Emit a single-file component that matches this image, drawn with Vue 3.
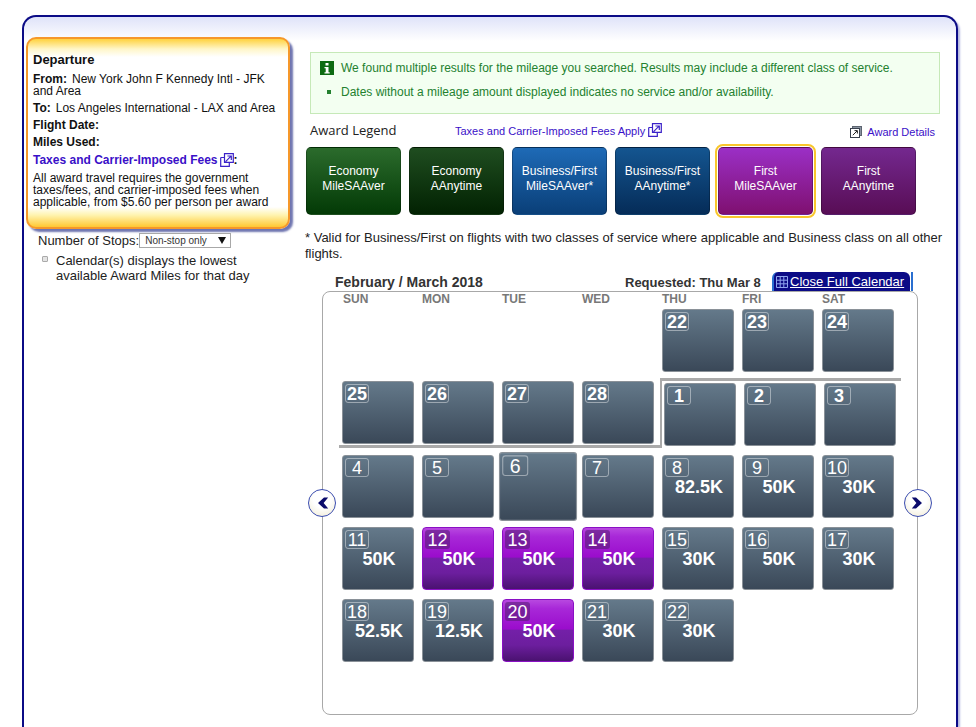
<script setup>
const legend = [
  { a: 'Economy', b: 'MileSAAver', c: 'g1' },
  { a: 'Economy', b: 'AAnytime', c: 'g2' },
  { a: 'Business/First', b: 'MileSAAver*', c: 'b1' },
  { a: 'Business/First', b: 'AAnytime*', c: 'b2' },
  { a: 'First', b: 'MileSAAver', c: 'p1', on: true },
  { a: 'First', b: 'AAnytime', c: 'p2' },
]
const days = ['SUN', 'MON', 'TUE', 'WED', 'THU', 'FRI', 'SAT']
const c = (d, m = '', o = {}) => ({ d, m, ...o })
const weeks = [
  [null, null, null, null, c(22, '', { b: 1 }), c(23, '', { b: 1 }), c(24, '', { b: 1 })],
  [c(25, '', { b: 1 }), c(26, '', { b: 1 }), c(27, '', { b: 1 }), c(28, '', { b: 1 }), c(1, '', { b: 1, s: 1 }), c(2, '', { b: 1, s: 1 }), c(3, '', { b: 1, s: 1 })],
  [c(4), c(5), c(6, '', { big: 1 }), c(7), c(8, '82.5K'), c(9, '50K'), c(10, '30K')],
  [c(11, '50K'), c(12, '50K', { p: 1 }), c(13, '50K', { p: 1 }), c(14, '50K', { p: 1 }), c(15, '30K'), c(16, '50K'), c(17, '30K')],
  [c(18, '52.5K'), c(19, '12.5K'), c(20, '50K', { p: 1 }), c(21, '30K'), c(22, '30K'), null, null],
]
</script>

<template>
  <div class="panel">
    <aside class="side">
      <div class="box">
        <h3>Departure</h3>
        <p class="wrap"><b class="lab">From:</b>New York John F Kennedy Intl - JFK and Area</p>
        <p class="wrap"><b class="lab">To:</b>Los Angeles International - LAX and Area</p>
        <p class="wrap"><b>Flight Date:</b></p>
        <p class="wrap"><b>Miles Used:</b></p>
        <p class="wrap fee"><b><span class="link">Taxes and Carrier-Imposed Fees</span>
          <svg class="ext" width="14" height="14" viewBox="0 0 14 14" fill="none" stroke="#3a22c8" stroke-width="1.2"><path d="M4.5 .7h8.8v8.6H4.5zM.7 4.5h3.6M.7 4.5v8.8h8.6V9.4M5.6 8.6L11 3.2M7.4 3h3.9v3.9"/></svg>:</b></p>
        <p class="small">All award travel requires the government taxes/fees, and carrier-imposed fees when applicable, from $5.60 per person per award</p>
      </div>
      <div class="stops">
        <span>Number of Stops:</span>
        <div class="select"><span>Non-stop only</span><i></i></div>
      </div>
      <div class="check">
        <i></i>
        <span>Calendar(s) displays the lowest available Award Miles for that day</span>
      </div>
    </aside>

    <main class="main">
      <div class="notice">
        <div class="nrow">
          <svg width="14" height="14" viewBox="0 0 14 14"><rect width="14" height="14" fill="#0d6b12"/><rect x="5.5" y="2" width="3" height="2.5" fill="#fff"/><path d="M4.5 6h4v5.2h1.2V12.4H4.5v-1.2h1.2V7.2H4.5z" fill="#fff"/></svg>
          <span>We found multiple results for the mileage you searched. Results may include a different class of service.</span>
        </div>
        <div class="nrow second">
          <i></i>
          <span>Dates without a mileage amount displayed indicates no service and/or availability.</span>
        </div>
      </div>

      <div class="legendhead">
        <span class="lt">Award Legend</span>
        <span class="link lf">Taxes and Carrier-Imposed Fees Apply
          <svg class="ext" width="14" height="14" viewBox="0 0 14 14" fill="none" stroke="#3a22c8" stroke-width="1.2"><path d="M4.5 .7h8.8v8.6H4.5zM.7 4.5h3.6M.7 4.5v8.8h8.6V9.4M5.6 8.6L11 3.2M7.4 3h3.9v3.9"/></svg>
        </span>
        <span class="link ld">
          <svg width="12" height="12" viewBox="0 0 12 12" fill="none"><rect x="2.5" y=".5" width="9" height="9" fill="#8a93a0" stroke="#5c6470"/><rect x=".5" y="2.5" width="9" height="9" fill="#fff" stroke="#39414d"/><path d="M2.8 9.2L7 5M4.5 4.6h2.9v2.9" stroke="#222"/></svg>
          Award Details
        </span>
      </div>

      <div class="legend">
        <div v-for="l in legend" :key="l.a + l.b" class="lbtn" :class="[l.c, { on: l.on }]">
          <span>{{ l.a }}</span><span>{{ l.b }}</span>
        </div>
      </div>

      <p class="valid">* Valid for Business/First on flights with two classes of service where applicable and Business class on all other flights.</p>

      <div class="calhead">
        <b class="month">February / March 2018</b>
        <b class="req">Requested: Thu Mar 8</b>
        <div class="tab">
          <svg width="12" height="12" viewBox="0 0 12 12" fill="none" stroke="#8fa6ee"><path d="M.5 .5h11v11H.5zM4.2 .5v11M7.8 .5v11M.5 4.2h11M.5 7.8h11"/></svg>
          <u>Close Full Calendar</u>
        </div>
      </div>

      <div class="frame">
        <div class="dow"><span v-for="d in days" :key="d">{{ d }}</span></div>
        <div class="weeks">
          <div v-for="(w, i) in weeks" :key="i" class="week">
            <template v-for="(x, j) in w" :key="j">
              <div v-if="x" class="cell" :class="{ purple: x.p, big: x.big, shift: x.s }">
                <span class="num" :class="{ bold: x.b }">{{ x.d }}</span>
                <span class="miles">{{ x.m }}</span>
              </div>
              <div v-else class="gap"></div>
            </template>
          </div>
        </div>
        <div class="divider h1"></div>
        <div class="divider v"></div>
        <div class="divider h2"></div>
        <div class="nav prev"><svg width="16" height="14" viewBox="0 0 16 14"><path d="M10 1.5h4.2L9.6 7l4.6 5.5H10L4 7z" fill="#0b0b6b"/></svg></div>
        <div class="nav next"><svg width="16" height="14" viewBox="0 0 16 14"><path d="M6 1.5H1.8L6.4 7l-4.6 5.5H6L12 7z" fill="#0b0b6b"/></svg></div>
      </div>
    </main>
  </div>
</template>

<style>
html, body { margin: 0; background: #fff; overflow: hidden; }
</style>

<style scoped>
* { box-sizing: border-box; }
.panel {
  margin: 15px 0 0 22px;
  width: 936px;
  height: 712px;
  border: solid #0b0b86;
  border-width: 2.5px 2.5px 0 2.5px;
  border-radius: 14px 14px 0 0;
  background: linear-gradient(#dfe3f9, #fff 24px);
  box-shadow: 3px 2px 2px -1px #b4b8e0;
  display: flex;
  font: 12px/12px "Liberation Sans", Arial, sans-serif;
  color: #111;
}
.side { width: 278px; padding: 20px 0 0 2px; flex: none; }
.box {
  width: 264px;
  height: 192px;
  border: 2px solid #f6982a;
  border-radius: 10px;
  background: linear-gradient(#ffd23e 0, #fff6c8 10px, #fff 18px, #fff calc(100% - 20px), #fff4b0 calc(100% - 12px), #ffc832 100%);
  box-shadow: 3px 3px 2px #6f75b0;
  padding: 13px 4px 0 5px;
}
.box h3 { margin: 0 0 6px; font-size: 13px; line-height: 15px; font-weight: 700; }
.wrap { margin: 0 0 5px; }
.wrap b { font-weight: 700; }
.lab { margin-right: 5px; }
.fee { margin-top: 4px; }
.fee .ext { vertical-align: -3px; margin-left: 2px; }
.small { margin: 5px 0 0; line-height: 12px; }
.link { color: #3a10c8; }
.stops { display: flex; align-items: center; margin: 4px 0 0 12px; font-size: 13px; line-height: 15px; color: #222; }
.select {
  margin-left: 0;
  width: 92px;
  height: 15px;
  border: 1px solid #a8a8a8;
  display: flex;
  align-items: center;
  justify-content: space-between;
  padding: 0 4px 0 5px;
  font-size: 10px;
  background: #fff;
  color: #333;
}
.select i { width: 0; height: 0; border: 4px solid transparent; border-top: 7px solid #111; border-bottom: 0; }
.check { display: flex; margin: 5px 0 0 16px; font-size: 13px; line-height: 15px; width: 230px; color: #222; }
.check i { flex: none; width: 6px; height: 6px; margin: 3px 8px 0 0; border: 1px solid #aaa; border-radius: 1px; background: #e4e4e4; }

.main { width: 650px; flex: none; padding-top: 35px; margin-left: 3px; }
.notice {
  margin-left: 5px;
  width: 630px;
  height: 62px;
  border: 1px solid #c6e9b8;
  background: #f3fff1;
  color: #23812f;
  padding: 8px 0 0 9px;
  line-height: 14px;
}
.nrow { display: flex; align-items: center; gap: 7px; }
.second { margin-top: 10px; padding-left: 7px; gap: 10px; }
.second i { width: 4px; height: 4px; background: #23812f; }

.legendhead { display: flex; align-items: center; height: 16px; margin: 9px 0 0 5px; padding-right: 20px; }
.lt { font: 13px/16px "Open Sans", sans-serif; color: #222; width: 145px; margin-top: -2px; }
.lf { font-size: 11px; display: flex; align-items: center; gap: 3px; white-space: nowrap; }
.lf .ext { margin-top: -3px; }
.ld { margin-left: auto; font-size: 11px; display: flex; align-items: center; gap: 5px; margin-top: 1px; }

.legend { display: flex; gap: 8px; margin: 8px 0 0 1px; }
.lbtn {
  width: 95px;
  height: 68px;
  border-radius: 5px;
  color: #fff;
  font-size: 12px;
  line-height: 15px;
  display: flex;
  flex-direction: column;
  align-items: center;
  justify-content: center;
  padding-bottom: 4px;
  border: 1px solid rgba(0, 0, 0, .25);
}
.g1 { background: linear-gradient(#2b6b2c, #033a06); }
.g2 { background: linear-gradient(#1f4d20, #022202); }
.b1 { background: linear-gradient(#1e6ab6, #0a3f78); }
.b2 { background: linear-gradient(#145590, #052c58); }
.p1 { background: linear-gradient(#9b2fc6, #7f1070); }
.p2 { background: linear-gradient(#74288f, #580d55); }
.on { outline: 2px solid #f9c62c; outline-offset: 1px; }

.valid { margin: 15px 0 0; width: 645px; font-size: 13px; line-height: 16px; color: #222; }

.calhead { display: flex; align-items: flex-end; height: 20px; margin: 9px 0 0 30px; color: #333; }
.month { font-size: 14px; line-height: 17px; width: 290px; }
.req { font-size: 13px; line-height: 16px; width: 147px; }
.tab {
  width: 138px;
  height: 19px;
  background: #0b0b86;
  border-left: 2px solid #2a6fd0;
  border-radius: 6px 6px 0 0;
  color: #fff;
  display: flex;
  align-items: center;
  gap: 2px;
  padding-left: 2px;
  font-size: 13px;
  white-space: nowrap;
  position: relative;
}
.tab::after { content: ''; position: absolute; right: -3px; top: 0; width: 2px; height: 19px; background: #2a6fd0; }

.frame {
  position: relative;
  margin-left: 17px;
  width: 596px;
  height: 424px;
  border: 1px solid #a8a8a8;
  border-radius: 8px;
  padding: 0 0 0 19px;
}
.dow { display: grid; grid-template-columns: repeat(7, 80px); font-size: 12px; font-weight: 700; line-height: 14px; height: 17px; color: #787878; }
.dow span:first-child { padding-left: 1px; }
.weeks { display: flex; flex-direction: column; gap: 9px; }
.week { display: flex; gap: 8px; height: 63px; }
.week:nth-child(3) { margin-top: 2px; }
.gap { width: 72px; }
.cell {
  width: 72px;
  height: 63px;
  border: 1px solid #8a9198;
  border-radius: 3px;
  background: linear-gradient(#64798a, #3a4858);
  padding: 2px;
  color: #fff;
  display: flex;
  flex-direction: column;
}
.shift { transform: translate(2px, 2px); }
.big { transform: scale(1.085, 1.095); }
.num {
  width: 24px;
  height: 19px;
  border: 1px solid rgba(255, 255, 255, .42);
  border-radius: 3px;
  font-size: 18px;
  line-height: 18px;
  text-align: center;
  flex: none;
  white-space: nowrap;
}
.bold { font-weight: 700; }
.miles { font-size: 18px; font-weight: 700; line-height: 20px; text-align: center; padding-left: 2px; }
.purple {
  border: 1px solid #8a10c4;
  border-radius: 4px;
  background: linear-gradient(#b848e0 0, #a828d8 14%, #9a0ccc 48%, #7420a8 49%, #6c1e9e 74%, #4a1270 100%);
}
.purple .num { background: rgba(80, 30, 110, .55); border-color: transparent; width: 25px; }

.divider { position: absolute; background: #aaa; }
.h1 { left: 337px; top: 86px; width: 241px; height: 3px; }
.v { left: 337px; top: 86px; width: 2px; height: 70px; }
.h2 { left: 16px; top: 153px; width: 323px; height: 3px; }
.nav {
  position: absolute;
  top: 197px;
  width: 28px;
  height: 28px;
  border-radius: 50%;
  border: 1px solid #3a4cb0;
  background: radial-gradient(circle at 50% 35%, #fff 40%, #efead2 100%);
  display: flex;
  align-items: center;
  justify-content: center;
}
.prev { left: -15px; }
.next { left: 581px; }
</style>
